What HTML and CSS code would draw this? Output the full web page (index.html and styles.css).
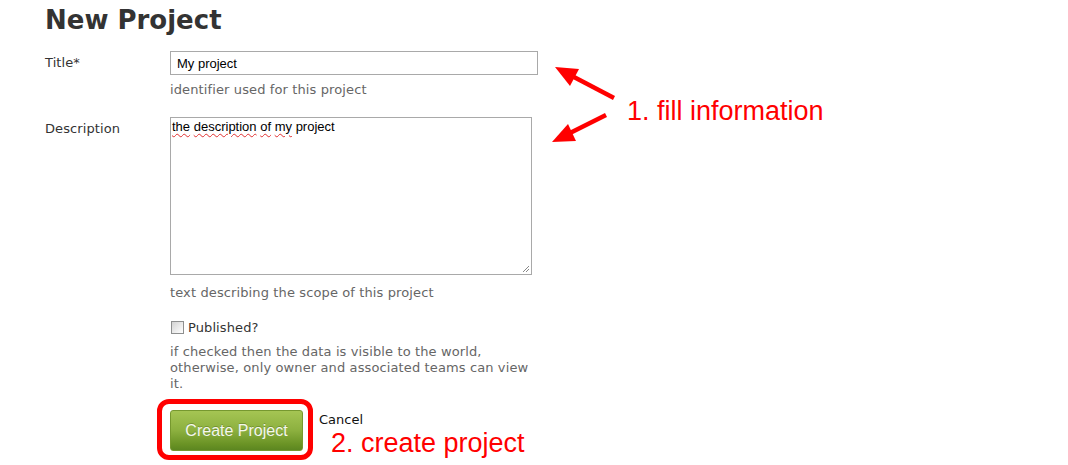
FILE: index.html
```html
<!DOCTYPE html>
<html>
<head>
<meta charset="utf-8">
<title>New Project</title>
<link rel="stylesheet" href="styles.css">
</head>
<body>
<div class="page">
  <h1 class="title">New Project</h1>
  <form class="form">
    <div class="field field-title">
      <label class="label">Title*</label>
      <div class="control">
        <input class="text-input" type="text" value="My project">
        <p class="hint hint-input">identifier used for this project</p>
      </div>
    </div>
    <div class="field field-desc">
      <label class="label">Description</label>
      <div class="control">
        <div class="textarea"><span class="sp">the</span> <span class="sp">description</span> <span class="sp">of</span> <span class="sp">my</span> project<svg class="grip" width="9" height="9" viewBox="0 0 9 9"><path d="M8 2 L2 8 M8 5 L5 8" stroke="#888" stroke-width="1" fill="none"/></svg></div>
        <p class="hint hint-area">text describing the scope of this project</p>
      </div>
    </div>
    <div class="field field-pub">
      <span class="label"></span>
      <div class="control">
        <div class="check-row">
          <input class="checkbox" type="checkbox" id="pub">
          <label class="check-label" for="pub">Published?</label>
        </div>
        <p class="hint hint-pub">if checked then the data is visible to the world, otherwise, only owner and associated teams can view it.</p>
        <div class="actions">
          <button class="btn" type="button">Create Project</button>
          <a class="cancel">Cancel</a>
        </div>
      </div>
    </div>
  </form>

  <svg class="arrows" width="1068" height="465" viewBox="0 0 1068 465">
    <line x1="614" y1="98" x2="572" y2="76" stroke="#f00" stroke-width="4.5"/>
    <polygon points="555,67 579,69 570,86" fill="#f00"/>
    <line x1="606" y1="115" x2="570" y2="133" stroke="#f00" stroke-width="4.5"/>
    <polygon points="552,142 576,141 568,124" fill="#f00"/>
  </svg>
  <div class="note note-1">1. fill information</div>
  <div class="note note-2">2. create project</div>
  <div class="ring"></div>
</div>
</body>
</html>
```
FILE: styles.css
```css
html, body {
  margin: 0;
  padding: 0;
  background: #fff;
}
body {
  font-family: "DejaVu Sans", Verdana, sans-serif;
  font-size: 13px;
  color: #333;
  overflow: hidden;
}
.page {
  position: relative;
  padding-left: 45px;
  min-height: 465px;
}
.title {
  margin: 0;
  padding-top: 5px;
  font-size: 26px;
  line-height: 30px;
  font-weight: bold;
  color: #333;
}
.form {
  margin-top: 16px;
}
.field {
  display: grid;
  grid-template-columns: 125px 1fr;
}
.field-title {
  margin-bottom: 19px;
}
.field-desc {
  margin-bottom: 19px;
}
.label {
  padding-top: 4px;
  line-height: 16px;
  color: #333;
  letter-spacing: 0.1px;
}
.control {
  display: flex;
  flex-direction: column;
  align-items: flex-start;
}
.text-input {
  box-sizing: border-box;
  display: block;
  width: 368px;
  height: 24px;
  margin: 0;
  padding: 0 6px;
  border: 1px solid #a9a9a9;
  font-family: "Liberation Sans", Arial, sans-serif;
  font-size: 13px;
  color: #000;
  outline: none;
}
.hint {
  margin: 0;
  line-height: 16px;
  color: #666;
  letter-spacing: 0.12px;
}
.hint-input {
  margin-top: 7px;
}
.hint-area {
  margin-top: 10px;
}
.hint-pub {
  margin-top: 8px;
  width: 362px;
}
.textarea {
  position: relative;
  box-sizing: border-box;
  width: 362px;
  height: 158px;
  border: 1px solid #a9a9a9;
  padding: 1px 1px;
  font-family: "Liberation Sans", Arial, sans-serif;
  font-size: 13px;
  line-height: 15px;
  color: #000;
}
.sp {
  text-decoration: underline wavy #e03030;
  text-decoration-thickness: 1px;
  text-underline-offset: 2px;
}
.grip {
  position: absolute;
  right: 1px;
  bottom: 1px;
}
.check-row {
  display: flex;
  align-items: flex-start;
  line-height: 16px;
}
.checkbox {
  appearance: none;
  -webkit-appearance: none;
  box-sizing: border-box;
  width: 13px;
  height: 13px;
  margin: 1px 4px 0 1px;
  border: 1px solid #8e8f8f;
  background: linear-gradient(135deg, #d2d2d2 0%, #f2f2f2 70%, #fff 100%);
}
.check-label {
  color: #333;
  letter-spacing: 0.1px;
}
.actions {
  display: flex;
  align-items: flex-start;
  margin-top: 18px;
}
.btn {
  box-sizing: border-box;
  width: 133px;
  height: 41px;
  margin: 0;
  padding: 0;
  border: 1px solid #76982f;
  border-radius: 3px;
  background: linear-gradient(to bottom, #a5c553 0%, #8cb03f 50%, #6a9325 85%, #5c8620 100%);
  font-family: "Liberation Sans", Arial, sans-serif;
  font-size: 16px;
  color: #f4f7ee;
  text-shadow: 0 -1px 0 rgba(60, 80, 20, 0.35);
}
.cancel {
  margin-left: 16px;
  padding-top: 2px;
  line-height: 16px;
  color: #111;
}
.arrows {
  position: absolute;
  left: 0;
  top: 0;
  pointer-events: none;
}
.note {
  position: absolute;
  font-family: "Liberation Sans", Arial, sans-serif;
  font-size: 27px;
  line-height: 22px;
  color: #f00;
  white-space: nowrap;
}
.note-1 {
  left: 627px;
  top: 100px;
}
.note-2 {
  left: 331px;
  top: 432px;
}
.ring {
  position: absolute;
  left: 157px;
  top: 399px;
  width: 156px;
  height: 61px;
  box-sizing: border-box;
  border: 5px solid #f00;
  border-radius: 12px;
  pointer-events: none;
}
```
